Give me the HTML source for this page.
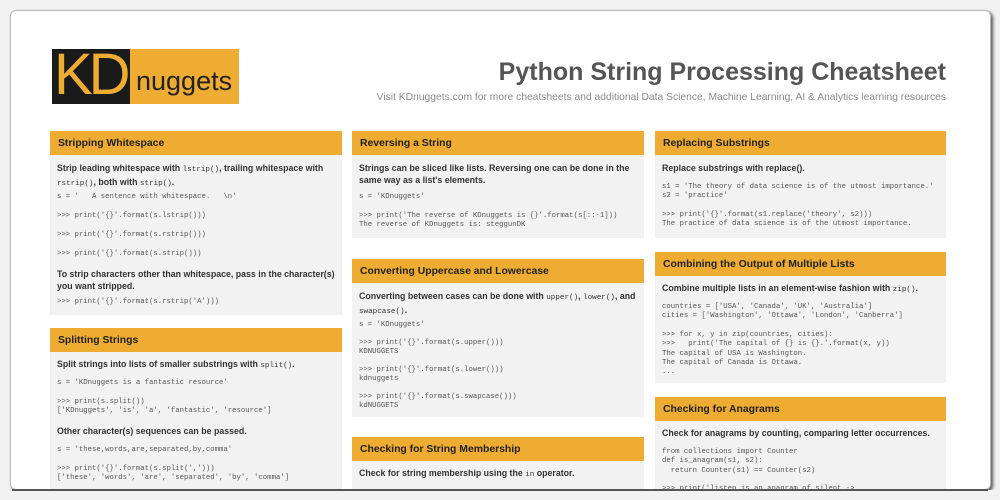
<!DOCTYPE html>
<html><head><meta charset="utf-8"><style>
body{margin:0;width:1000px;height:500px;background:#f2f2f2;position:relative;overflow:hidden;font-family:"Liberation Sans",sans-serif}
.card{position:absolute;left:10px;top:10px;width:979px;height:478px;background:#fff;border:1px solid #bbb;border-radius:6px;box-shadow:2px 2px 3px #555}
.a{position:absolute}
.h{position:absolute;background:#efac32;height:24px;font-weight:bold;font-size:10.4px;color:#222;line-height:25px;padding-left:8px;box-sizing:border-box}
.b{position:absolute;background:#f2f2f2}
.t{position:absolute;font-weight:bold;font-size:8.8px;color:#333;line-height:12px;white-space:nowrap}
.c{position:absolute;font-family:"Liberation Mono",monospace;font-size:7.3px;color:#555;line-height:9.3px;white-space:pre}
.t code{font-family:"Liberation Mono",monospace;font-weight:normal;font-size:7.6px}
</style></head><body>
<div class="card"></div>
<div class="a" style="left:52px;top:49px;width:187px;height:55px;background:#efac32"></div>
<div class="a" style="left:52px;top:49px;width:78px;height:55px;background:#1a1a1a"></div>
<div class="a" style="left:54px;top:45px;font-size:58px;color:#efac32;letter-spacing:-4px;line-height:60px">KD</div>
<div class="a" style="left:136px;top:64px;font-size:27px;color:#222;line-height:34px">nuggets</div>
<div class="a" style="right:54px;top:58px;font-size:25px;font-weight:bold;color:#555;white-space:nowrap">Python String Processing Cheatsheet</div>
<div class="a" style="right:54px;top:92px;font-size:10.3px;color:#8a8a8a;white-space:nowrap">Visit KDnuggets.com for more cheatsheets and additional Data Science, Machine Learning, AI &amp; Analytics learning resources</div>

<!-- col1 -->
<div class="h" style="left:50px;top:131px;width:292px">Stripping Whitespace</div>
<div class="b" style="left:50px;top:155px;width:292px;height:160px"></div>
<div class="t" style="left:57px;top:162px">Strip leading whitespace with <code>lstrip()</code>, trailing whitespace with<br><code>rstrip()</code>, both with <code>strip()</code>.</div>
<div class="c" style="left:57px;top:193px">s = '   A sentence with whitespace.   \n'</div>
<div class="c" style="left:57px;top:212px">&gt;&gt;&gt; print('{}'.format(s.lstrip()))</div>
<div class="c" style="left:57px;top:231px">&gt;&gt;&gt; print('{}'.format(s.rstrip()))</div>
<div class="c" style="left:57px;top:250px">&gt;&gt;&gt; print('{}'.format(s.strip()))</div>
<div class="t" style="left:57px;top:268px">To strip characters other than whitespace, pass in the character(s)<br>you want stripped.</div>
<div class="c" style="left:57px;top:298px">&gt;&gt;&gt; print('{}'.format(s.rstrip('A')))</div>

<div class="h" style="left:50px;top:328px;width:292px">Splitting Strings</div>
<div class="b" style="left:50px;top:352px;width:292px;height:140px"></div>
<div class="t" style="left:57px;top:358px">Split strings into lists of smaller substrings with <code>split()</code>.</div>
<div class="c" style="left:57px;top:379px">s = 'KDnuggets is a fantastic resource'</div>
<div class="c" style="left:57px;top:398px">&gt;&gt;&gt; print(s.split())
['KDnuggets', 'is', 'a', 'fantastic', 'resource']</div>
<div class="t" style="left:57px;top:425px">Other character(s) sequences can be passed.</div>
<div class="c" style="left:57px;top:446px">s = 'these,words,are,separated,by,comma'</div>
<div class="c" style="left:57px;top:465px">&gt;&gt;&gt; print('{}'.format(s.split(',')))
['these', 'words', 'are', 'separated', 'by', 'comma']</div>

<!-- col2 -->
<div class="h" style="left:352px;top:131px;width:292px">Reversing a String</div>
<div class="b" style="left:352px;top:155px;width:292px;height:83px"></div>
<div class="t" style="left:359px;top:162px">Strings can be sliced like lists. Reversing one can be done in the<br>same way as a list's elements.</div>
<div class="c" style="left:359px;top:193px">s = 'KDnuggets'</div>
<div class="c" style="left:359px;top:212px">&gt;&gt;&gt; print('The reverse of KDnuggets is {}'.format(s[::-1]))
The reverse of KDnuggets is: steggunDK</div>

<div class="h" style="left:352px;top:259px;width:292px">Converting Uppercase and Lowercase</div>
<div class="b" style="left:352px;top:283px;width:292px;height:134px"></div>
<div class="t" style="left:359px;top:290px">Converting between cases can be done with <code>upper()</code>, <code>lower()</code>, and<br><code>swapcase()</code>.</div>
<div class="c" style="left:359px;top:321px">s = 'KDnuggets'</div>
<div class="c" style="left:359px;top:339px">&gt;&gt;&gt; print('{}'.format(s.upper()))
KDNUGGETS</div>
<div class="c" style="left:359px;top:366px">&gt;&gt;&gt; print('{}'.format(s.lower()))
kdnuggets</div>
<div class="c" style="left:359px;top:393px">&gt;&gt;&gt; print('{}'.format(s.swapcase()))
kdNUGGETS</div>

<div class="h" style="left:352px;top:437px;width:292px">Checking for String Membership</div>
<div class="b" style="left:352px;top:461px;width:292px;height:30px"></div>
<div class="t" style="left:359px;top:467px">Check for string membership using the <code>in</code> operator.</div>

<!-- col3 -->
<div class="h" style="left:655px;top:131px;width:291px">Replacing Substrings</div>
<div class="b" style="left:655px;top:155px;width:291px;height:83px"></div>
<div class="t" style="left:662px;top:162px">Replace substrings with replace().</div>
<div class="c" style="left:662px;top:183px">s1 = 'The theory of data science is of the utmost importance.'
s2 = 'practice'</div>
<div class="c" style="left:662px;top:211px">&gt;&gt;&gt; print('{}'.format(s1.replace('theory', s2)))
The practice of data science is of the utmost importance.</div>

<div class="h" style="left:655px;top:252px;width:291px">Combining the Output of Multiple Lists</div>
<div class="b" style="left:655px;top:276px;width:291px;height:107px"></div>
<div class="t" style="left:662px;top:282px">Combine multiple lists in an element-wise fashion with <code>zip()</code>.</div>
<div class="c" style="left:662px;top:303px">countries = ['USA', 'Canada', 'UK', 'Australia']
cities = ['Washington', 'Ottawa', 'London', 'Canberra']</div>
<div class="c" style="left:662px;top:331px">&gt;&gt;&gt; for x, y in zip(countries, cities):
&gt;&gt;&gt;   print('The capital of {} is {}.'.format(x, y))
The capital of USA is Washington.
The capital of Canada is Ottawa.
...</div>

<div class="h" style="left:655px;top:397px;width:291px">Checking for Anagrams</div>
<div class="b" style="left:655px;top:421px;width:291px;height:70px"></div>
<div class="t" style="left:662px;top:427px">Check for  anagrams by counting,  comparing  letter occurrences.</div>
<div class="c" style="left:662px;top:448px">from collections import Counter
def is_anagram(s1, s2):
  return Counter(s1) == Counter(s2)</div>
<div class="c" style="left:662px;top:485px">&gt;&gt;&gt; print('listen is an anagram of silent -&gt;</div>
<div class="a" style="left:0;top:490px;width:1000px;height:10px;background:#f2f2f2"></div>
<div class="a" style="left:12px;top:489px;width:976px;height:2px;background:#555"></div>
</body></html>
